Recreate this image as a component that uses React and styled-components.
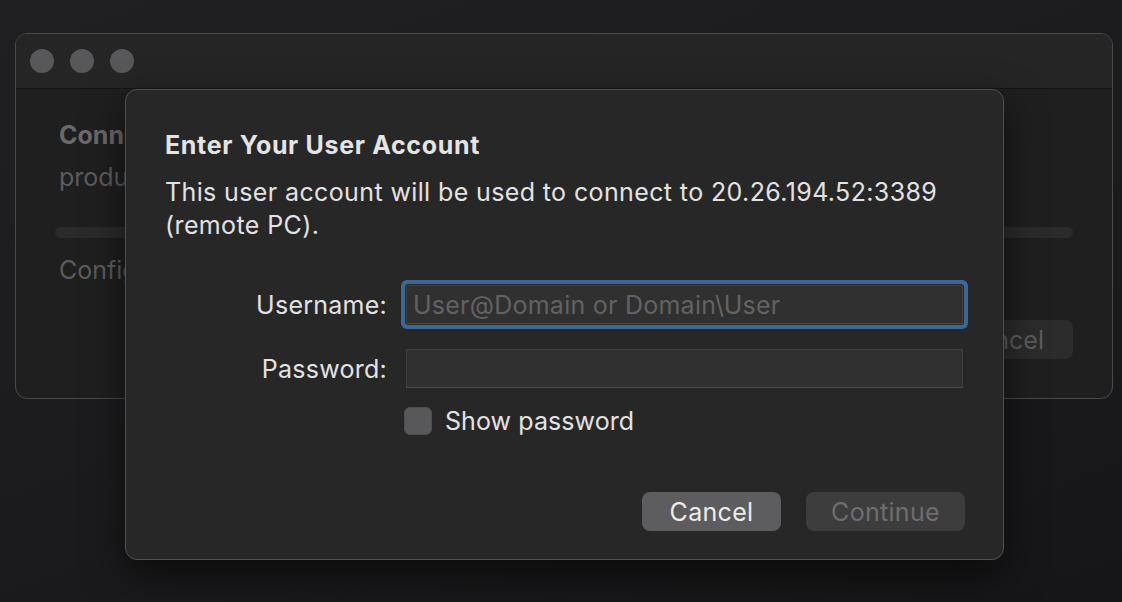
import styled, { createGlobalStyle } from "styled-components"

const GlobalStyle = createGlobalStyle`
	html, body {
		margin: 0;
		padding: 0;
		background: #1c1c1e;
	}
	body {
		font-family: Inter, "Open Sans", "Liberation Sans", sans-serif;
		-webkit-font-smoothing: antialiased;
	}
`

const Screen = styled.div`
	position: relative;
	width: 1122px;
	height: 602px;
	overflow: hidden;
	background: linear-gradient(160deg, #202022 0%, #1c1c1e 45%, #161618 100%);
	padding: 33px 9px 0 15px;
	box-sizing: border-box;
`

const BackWindow = styled.div`
	width: 1098px;
	height: 366px;
	border-radius: 12px;
	border: 1px solid #4a4a4c;
	background: #1f1f20;
	box-sizing: border-box;
	overflow: hidden;
	display: flex;
	flex-direction: column;
`

const TitleBar = styled.div`
	height: 55px;
	flex-shrink: 0;
	background: #252526;
	border-bottom: 1px solid #151515;
	display: flex;
	align-items: center;
	gap: 16px;
	padding-left: 14px;
	box-sizing: border-box;
`

const Light = styled.span`
	width: 24px;
	height: 24px;
	border-radius: 50%;
	background: #58585a;
`

const BackBody = styled.div`
	flex: 1;
	padding: 32px 39px 0 43px;
	display: flex;
	flex-direction: column;
`

const BackHeading = styled.div`
	font-size: 25px;
	font-weight: 700;
	color: #6a6a6b;
	line-height: 28px;
`

const BackLine = styled.div`
	font-size: 25px;
	color: #5c5c5d;
	line-height: 28px;
	margin-top: ${(props) => props.gap || 14}px;
`

const Progress = styled.div`
	height: 11px;
	border-radius: 6px;
	background: #2b2b2c;
	margin: 36px 0 0 -4px;
`

const BackButtonRow = styled.div`
	display: flex;
	justify-content: flex-end;
	margin-top: 36px;
`

const BackButton = styled.div`
	width: 140px;
	height: 39px;
	border-radius: 8px;
	background: #2c2c2d;
	color: #5c5c5d;
	font-size: 25px;
	display: flex;
	align-items: center;
	justify-content: center;
`

const Dialog = styled.div`
	position: absolute;
	left: 125px;
	top: 89px;
	width: 879px;
	height: 471px;
	box-sizing: border-box;
	border-radius: 12px;
	background: #282728;
	border: 1px solid #505051;
	box-shadow: 0 16px 40px rgba(0, 0, 0, 0.55);
	padding: 41px 40px 28px 39px;
	display: flex;
	flex-direction: column;
	color: #e2e2e2;
`

const Title = styled.div`
	font-size: 25px;
	font-weight: 700;
	line-height: 28px;
	letter-spacing: 0.67px;
	color: #e4e4e4;
`

const Message = styled.div`
	font-size: 25px;
	line-height: 33px;
	letter-spacing: 0.38px;
	margin-top: 17px;
	color: #e2e2e2;
`

const Form = styled.div`
	display: grid;
	grid-template-columns: 222px 1fr;
	column-gap: 19px;
	row-gap: 25px;
	margin-top: 43px;
	align-items: center;
	letter-spacing: 0.25px;
`

const Label = styled.div`
	font-size: 25px;
	text-align: right;
	color: #e2e2e2;
`

const Field = styled.div`
	height: 39px;
	box-sizing: border-box;
	background: #313031;
	border: 1px solid #424142;
	border-bottom-color: #4c4b4c;
	display: flex;
	align-items: center;
	padding-left: 6px;
	font-size: 25px;
	color: #636263;
	border-radius: ${(props) => (props.focused ? "2px" : "0")};
	box-shadow: ${(props) => (props.focused ? "0 0 0 1px #2a2a2a, 0 0 0 5px #3a6898" : "none")};
`

const CheckRow = styled.label`
	grid-column: 2;
	display: flex;
	align-items: center;
	gap: 13px;
	margin: -7px 0 0 -2px;
	font-size: 25px;
	letter-spacing: 0.08px;
	color: #e2e2e2;
`

const Box = styled.span`
	width: 28px;
	height: 28px;
	border-radius: 6px;
	background: #58575a;
	border: 1px solid #4e4d4f;
	box-sizing: border-box;
`

const Actions = styled.div`
	margin-top: auto;
	margin-right: -2px;
	display: flex;
	justify-content: flex-end;
	gap: 25px;
`

const Button = styled.div`
	width: ${(props) => props.width}px;
	height: 39px;
	border-radius: 8px;
	display: flex;
	align-items: center;
	justify-content: center;
	font-size: 25px;
	letter-spacing: 0.3px;
	background: ${(props) => (props.disabled ? "#3e3d3e" : "#5d5c5e")};
	color: ${(props) => (props.disabled ? "#6e6d6f" : "#ececec")};
`

const App = () => {
	return (
		<>
			<GlobalStyle />
			<Screen>
				<BackWindow>
					<TitleBar>
						<Light />
						<Light />
						<Light />
					</TitleBar>
					<BackBody>
						<BackHeading>Connecting</BackHeading>
						<BackLine>production</BackLine>
						<Progress />
						<BackLine gap={18}>Configuring</BackLine>
						<BackButtonRow>
							<BackButton>Cancel</BackButton>
						</BackButtonRow>
					</BackBody>
				</BackWindow>
				<Dialog>
					<Title>Enter Your User Account</Title>
					<Message>
						This user account will be used to connect to 20.26.194.52:3389
						<br />
						(remote PC).
					</Message>
					<Form>
						<Label>Username:</Label>
						<Field focused>User@Domain or Domain\User</Field>
						<Label>Password:</Label>
						<Field />
						<CheckRow>
							<Box />
							Show password
						</CheckRow>
					</Form>
					<Actions>
						<Button width={139}>Cancel</Button>
						<Button width={159} disabled>
							Continue
						</Button>
					</Actions>
				</Dialog>
			</Screen>
		</>
	)
}

export default App
